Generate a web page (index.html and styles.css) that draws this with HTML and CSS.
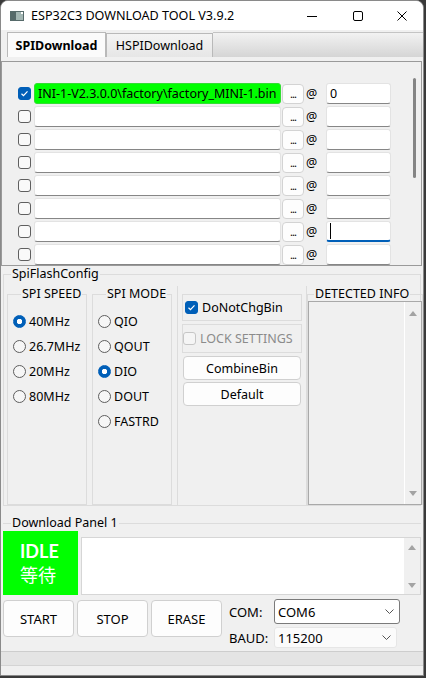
FILE: index.html
```html
<!DOCTYPE html>
<html lang="en">
<head>
<meta charset="utf-8">
<title>ESP32C3 DOWNLOAD TOOL V3.9.2</title>
<link rel="stylesheet" href="styles.css">
</head>
<body>
<div class="window">
  <header class="titlebar">
    <svg class="app-icon" viewBox="0 0 14 10">
      <rect x="0" y="0" width="14" height="10" fill="#566a6a"/>
      <rect x="6" y="1" width="7" height="8" fill="#a3b6b3"/>
      <rect x="11" y="1" width="2" height="2" fill="#ffffff"/>
    </svg>
    <span class="title">ESP32C3 DOWNLOAD TOOL V3.9.2</span>
    <div class="caption">
      <span class="cap-btn"><svg viewBox="0 0 10 10"><path d="M0 5.5H10" /></svg></span>
      <span class="cap-btn"><svg viewBox="0 0 10 10"><rect x="0.5" y="0.5" width="9" height="9" rx="1.5" /></svg></span>
      <span class="cap-btn close"><svg viewBox="0 0 10 10"><path d="M0.5 0.5L9.5 9.5M9.5 0.5L0.5 9.5" /></svg></span>
    </div>
  </header>

  <nav class="tabs">
    <div class="tab active">SPIDownload</div>
    <div class="tab">HSPIDownload</div>
    <div class="tab-fill"></div>
  </nav>

  <section class="file-panel">
    <div class="file-rows">
      <div class="row">
        <span class="cb checked"><svg viewBox="0 0 11 11"><path d="M2.5 5.8L4.5 7.7L8.5 3.4" /></svg></span>
        <span class="path hit">INI-1-V2.3.0.0\factory\factory_MINI-1.bin</span>
        <span class="browse">...</span>
        <span class="at">@</span>
        <span class="offset">0</span>
      </div>
      <div class="row">
        <span class="cb"></span><span class="path"></span><span class="browse">...</span><span class="at">@</span><span class="offset"></span>
      </div>
      <div class="row">
        <span class="cb"></span><span class="path"></span><span class="browse">...</span><span class="at">@</span><span class="offset"></span>
      </div>
      <div class="row">
        <span class="cb"></span><span class="path"></span><span class="browse">...</span><span class="at">@</span><span class="offset"></span>
      </div>
      <div class="row">
        <span class="cb"></span><span class="path"></span><span class="browse">...</span><span class="at">@</span><span class="offset"></span>
      </div>
      <div class="row">
        <span class="cb"></span><span class="path"></span><span class="browse">...</span><span class="at">@</span><span class="offset"></span>
      </div>
      <div class="row">
        <span class="cb"></span><span class="path"></span><span class="browse">...</span><span class="at">@</span><span class="offset focus"><i class="caret"></i></span>
      </div>
      <div class="row">
        <span class="cb"></span><span class="path"></span><span class="browse">...</span><span class="at">@</span><span class="offset"></span>
      </div>
    </div>
    <div class="vscroll"><div class="thumb"></div></div>
  </section>

  <fieldset class="group flash">
    <legend>SpiFlashConfig</legend>
    <div class="cols">
      <fieldset class="group speed">
        <legend>SPI SPEED</legend>
        <div class="radio on"><span class="dot"></span>40MHz</div>
        <div class="radio"><span class="dot"></span>26.7MHz</div>
        <div class="radio"><span class="dot"></span>20MHz</div>
        <div class="radio"><span class="dot"></span>80MHz</div>
      </fieldset>
      <fieldset class="group mode">
        <legend>SPI MODE</legend>
        <div class="radio"><span class="dot"></span>QIO</div>
        <div class="radio"><span class="dot"></span>QOUT</div>
        <div class="radio on"><span class="dot"></span>DIO</div>
        <div class="radio"><span class="dot"></span>DOUT</div>
        <div class="radio"><span class="dot"></span>FASTRD</div>
      </fieldset>
      <div class="opts">
        <div class="opt-box">
          <span class="cb checked"><svg viewBox="0 0 11 11"><path d="M2.5 5.8L4.5 7.7L8.5 3.4" /></svg></span>
          <span>DoNotChgBin</span>
        </div>
        <div class="opt-box locked">
          <span class="cb disabled"></span>
          <span>LOCK SETTINGS</span>
        </div>
        <button class="btn side">CombineBin</button>
        <button class="btn side">Default</button>
      </div>
      <fieldset class="group detected">
        <legend>DETECTED INFO</legend>
        <div class="listbox">
          <div class="list-body"></div>
          <div class="sb">
            <svg class="arrow" viewBox="0 0 8 5"><path d="M4 0L8 5H0Z" /></svg>
            <svg class="arrow" viewBox="0 0 8 5"><path d="M0 0H8L4 5Z" /></svg>
          </div>
        </div>
      </fieldset>
    </div>
  </fieldset>

  <fieldset class="group download">
    <legend>Download Panel 1</legend>
    <div class="status-row">
      <div class="state">
        <div class="state-en">IDLE</div>
        <div class="state-cjk">等待</div>
      </div>
      <div class="log">
        <div class="log-body"></div>
        <div class="sb">
          <svg class="arrow" viewBox="0 0 8 5"><path d="M4 0L8 5H0Z" /></svg>
          <svg class="arrow" viewBox="0 0 8 5"><path d="M0 0H8L4 5Z" /></svg>
        </div>
      </div>
    </div>
    <div class="actions">
      <button class="btn big">START</button>
      <button class="btn big">STOP</button>
      <button class="btn big">ERASE</button>
      <div class="port">
        <div class="port-row com">
          <span class="lbl">COM:</span>
          <span class="combo focus">COM6<svg class="chev" viewBox="0 0 9 5"><path d="M0.5 0.5L4.5 4.5L8.5 0.5" /></svg></span>
        </div>
        <div class="port-row baud">
          <span class="lbl">BAUD:</span>
          <span class="combo">115200<svg class="chev" viewBox="0 0 9 5"><path d="M0.5 0.5L4.5 4.5L8.5 0.5" /></svg></span>
        </div>
      </div>
    </div>
  </fieldset>

  <footer class="statusbar"><div class="band"></div></footer>
</div>
</body>
</html>
```

FILE: styles.css
```css
* { box-sizing: border-box; }
html, body { margin: 0; padding: 0; }
body {
  width: 426px;
  height: 678px;
  overflow: hidden;
  background: #3a3a3a;
  font-family: "Noto Sans", "Liberation Sans", sans-serif;
  font-size: 12.5px;
  color: #000;
}

.window {
  width: 424px;
  height: 676px;
  background: #f0f0f0;
  border: 1px solid #8a8a8a;
  border-radius: 8px 8px 0 0;
  overflow: hidden;
  display: flex;
  flex-direction: column;
}

/* title bar */
.titlebar {
  flex: none;
  height: 29px;
  background: #fff;
  display: flex;
  align-items: center;
}
.app-icon { width: 14px; height: 10px; margin-left: 9px; }
.title { margin-left: 7px; font-size: 12.6px; }
.caption { margin-left: auto; display: flex; height: 100%; }
.cap-btn {
  width: 46px;
  display: flex;
  align-items: center;
  justify-content: center;
}
.cap-btn.close { width: 42px; }
.cap-btn svg { width: 10px; height: 10px; fill: none; stroke: #000; stroke-width: 1; }

/* tabs */
.tabs {
  flex: none;
  display: flex;
  align-items: flex-end;
  height: 25px;
  margin-top: 2px;
  padding-left: 6px;
}
.tab {
  height: 24px;
  width: 107px;
  border: 1px solid #b9b9b9;
  border-bottom: none;
  background: linear-gradient(#f4f4f4, #e6e6e6);
  display: flex;
  align-items: center;
  justify-content: center;
}
.tab.active {
  width: 99px;
  height: 25px;
  background: #fbfbfb;
  font-weight: bold;
}
.tab-fill {
  flex: 1;
  height: 25px;
  border-top: 1px solid #c4c4c4;
  background: linear-gradient(#f2f2f2, #d5d5d5);
}

/* file list */
.file-panel {
  flex: none;
  margin-top: 4px;
  width: 421px;
  height: 205px;
  border: 1px solid #9a9a9a;
  display: flex;
  overflow: hidden;
}
.file-rows { flex: 1; padding: 20px 0 0 16px; }
.row { display: flex; align-items: center; height: 23px; }

.cb {
  flex: none;
  width: 13px;
  height: 13px;
  border: 1px solid #5f5f5f;
  border-radius: 3px;
  background: #f9f9f9;
}
.cb.checked { background: #005fb8; border-color: #005fb8; }
.cb svg { display: block; width: 11px; height: 11px; fill: none; stroke: #fff; stroke-width: 1.2; }
.cb.disabled { border-color: #c6c6c6; background: #f5f5f5; }

.path, .offset {
  flex: none;
  height: 21px;
  background: #fff;
  border: 1px solid #e3e3e3;
  border-bottom-color: #868686;
  border-radius: 3px;
  padding: 0 3px;
  line-height: 19px;
  white-space: nowrap;
  overflow: hidden;
}
.path { width: 247px; margin-left: 3px; }
.path.hit { background: #00ff00; border-color: #33dd33; }
.browse {
  flex: none;
  width: 22px;
  height: 20px;
  margin-left: 1px;
  border: 1px solid #d3d3d3;
  border-radius: 4px;
  background: #fdfdfd;
  font-size: 11px;
  line-height: 18px;
  text-align: center;
  letter-spacing: -1px;
}
.at { flex: none; width: 11px; margin-left: 2px; font-size: 12.5px; }
.offset { width: 65px; margin-left: 9px; }
.offset.focus { border-bottom: 2px solid #005fb8; padding-top: 1px; }
.caret { display: block; width: 1px; height: 16px; background: #000; }

.vscroll { flex: none; width: 17px; }
.thumb {
  width: 3px;
  height: 100px;
  margin: 16px 0 0 9px;
  background: #858585;
  border-radius: 2px;
}

/* group boxes */
.group {
  margin: 0;
  padding: 0;
  min-width: 0;
  border: 1px solid #dcdcdc;
}
.group > legend { padding: 0 1px; line-height: 16px; }

.flash { flex: none; margin: 0 2px; height: 240px; }
.flash > legend { margin-left: 7px; }
.cols { display: flex; margin-top: 4px; height: 219px; padding-left: 3px; }

.speed, .mode { flex: none; width: 80px; padding: 7px 0 0 5px; }
.speed > legend, .mode > legend { margin-left: 8px; }
.mode { margin-left: 5px; }

.radio { display: flex; align-items: center; height: 25px; gap: 3px; }
.dot {
  width: 13px;
  height: 13px;
  border-radius: 50%;
  border: 1px solid #5e5e5e;
  background: #f6f6f6;
}
.radio.on .dot {
  border-color: #005fb8;
  background: radial-gradient(circle, #fff 0 2.4px, #005fb8 3px);
}

.opts {
  flex: none;
  width: 130px;
  margin-left: 5px;
  border-left: 1px solid #dcdcdc;
  border-right: 1px solid #dcdcdc;
  padding: 8px 0 0 4px;
}
.opt-box {
  width: 120px;
  height: 27px;
  border: 1px solid #dcdcdc;
  display: flex;
  align-items: center;
  gap: 4px;
  padding-left: 2px;
}
.opt-box.locked { height: 29px; margin-top: 3px; padding-left: 0; color: #8b8b8b; }

.btn {
  font-family: inherit;
  font-size: 12.5px;
  color: #000;
  background: #fdfdfd;
  border: 1px solid #d0d0d0;
  border-radius: 4px;
  padding: 0;
}
.btn.side { display: block; width: 118px; height: 24px; margin: 3px 0 0 1px; }
.btn.side + .btn.side { margin-top: 2px; }

.detected { flex: none; width: 116px; border-bottom: none; }
.detected > legend { margin-left: 6px; }
.listbox {
  height: 204px;
  margin-top: -1px;
  border: 1px solid #a9a9a9;
  background: #f0f0f0;
  display: flex;
}
.list-body { flex: 1; }

.sb {
  flex: none;
  width: 17px;
  border-left: 1px solid #fff;
  background: #f0f0f0;
  display: flex;
  flex-direction: column;
  justify-content: space-between;
  align-items: center;
  padding: 9px 0 8px;
}
.arrow { width: 8px; height: 5px; fill: #a3a3a3; }

/* download panel */
.download {
  flex: none;
  margin: 9px 2px 0;
  border: none;
  border-top: 1px solid #dcdcdc;
}
.download > legend { margin-left: 8px; }
.status-row { display: flex; height: 64px; }
.state {
  flex: none;
  width: 75px;
  background: #00ff00;
  color: #fff;
  padding: 11px 0 0 17px;
  font-family: Lato, "Noto Sans CJK SC", sans-serif;
  font-size: 18px;
}
.state-en { font-weight: 700; line-height: 18px; }
.state-cjk { margin-top: 5px; line-height: 20px; }
.log {
  flex: 1;
  margin: 6px 0 0 3px;
  height: 58px;
  background: #fff;
  border: 1px solid #d6d6d6;
  display: flex;
}
.log-body { flex: 1; }
.log .sb { padding: 7px 0 6px; }

.actions { display: flex; height: 50px; margin-top: 4px; gap: 3px; }
.btn.big { flex: none; width: 71px; height: 37px; margin-top: 1px; font-size: 13px; }
.port { margin-left: 4px; }
.port-row { display: flex; align-items: center; }
.port-row.com { height: 25px; }
.port-row.baud { height: 21px; margin-top: 3px; }
.lbl { width: 45px; font-size: 13px; }
.combo {
  height: 100%;
  display: flex;
  align-items: center;
  padding-left: 3px;
  border: 1px solid #e6e6e6;
  border-radius: 3px;
  background: #fbfbfb;
  font-size: 13px;
}
.com .combo { width: 126px; }
.baud .combo { width: 123px; }
.combo.focus { border-color: #7a7a7a; background: #fff; }
.chev { width: 9px; height: 5px; margin-left: auto; margin-right: 5px; fill: none; stroke: #555; stroke-width: 1; }

.statusbar {
  flex: none;
  margin-top: auto;
  height: 24px;
  border-top: 1px solid #cdcdcd;
}
.band { height: 14px; background: #e4e4e4; border-bottom: 1px solid #d4d4d4; }
```
